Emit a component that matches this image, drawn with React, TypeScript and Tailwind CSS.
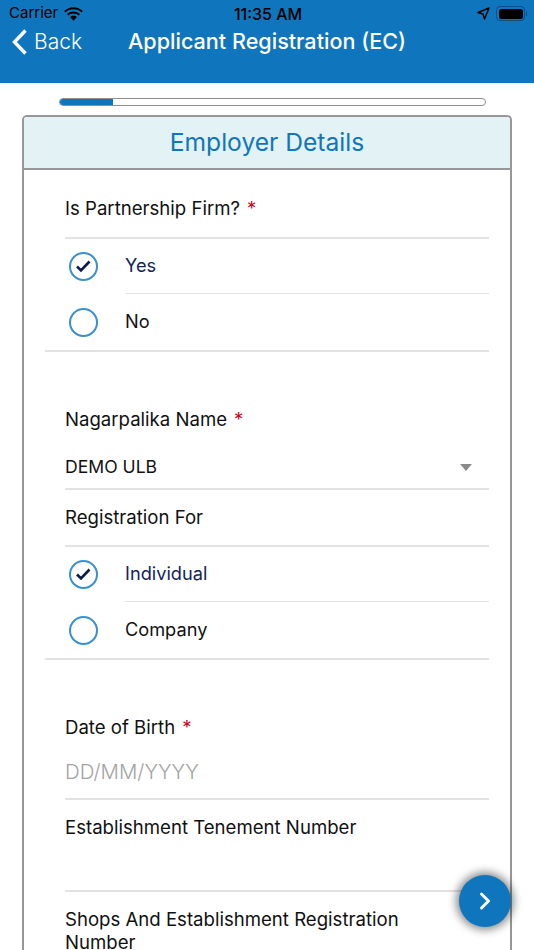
import { ChevronRight } from "lucide-react";

const font = "font-['Inter','Liberation_Sans',sans-serif]";

function Label({ text, required, className }: { text: string; required?: boolean; className: string }) {
  return (
    <div className={`pl-[41px] pr-[60px] ${className}`}>
      <div className="text-[18.6px] leading-[23px] text-[#111]">
        {text}
        {required && <span className="ml-[7px] text-[#d0021b]">*</span>}
      </div>
    </div>
  );
}

function Line({ indent = "ml-[41px]", thin }: { indent?: string; thin?: boolean }) {
  return <div className={`${indent} mr-[21px] ${thin ? "h-px bg-[#e4e4e4]" : "h-[2px] bg-[#e2e2e2]"}`} />;
}

function Radio({ label, checked, rowClass }: { label: string; checked?: boolean; rowClass: string }) {
  return (
    <div className={`flex items-center pl-[45px] ${rowClass}`}>
      <span className="flex h-[29px] w-[29px] shrink-0 items-center justify-center rounded-full border-2 border-[#3a90cf]">
        {checked && (
          <svg width="17" height="14" viewBox="0 0 17 14" fill="none">
            <path d="M2 7.5 L6 11.5 L14.5 2.5" stroke="#101a4a" strokeWidth="2.6" />
          </svg>
        )}
      </span>
      <span className={`ml-[27px] pb-[2px] text-[18.2px] leading-[24px] ${checked ? "text-[#14235c]" : "text-[#111]"}`}>{label}</span>
    </div>
  );
}

export default function App() {
  return (
    <div className={`relative h-[950px] w-[534px] overflow-hidden bg-white ${font}`}>
      <header className="h-[83px] bg-[#0f75bc]">
        <div className="flex h-[27px] items-center pl-[9px] pr-[7px] text-[15px] text-black">
          <div className="flex flex-1 items-center gap-[6px]">
            <span>Carrier</span>
            <svg width="19" height="14" viewBox="0 0 19 14" fill="black">
              <path d="M9.5 2.2c3.2 0 6 1.2 8.1 3.2l1.2-1.4C16.3 1.6 13 .2 9.5.2S2.7 1.6.2 4l1.2 1.4C3.5 3.4 6.3 2.2 9.5 2.2z" />
              <path d="M9.5 6.4c2 0 3.8.8 5.2 2L16 7C14.2 5.4 12 4.4 9.5 4.4S4.8 5.4 3 7l1.3 1.4c1.4-1.2 3.2-2 5.2-2z" />
              <path d="M9.5 8.7c-1.3 0-2.5.5-3.4 1.3l3.4 3.7 3.4-3.7c-.9-.8-2.1-1.3-3.4-1.3z" />
            </svg>
          </div>
          <span className="text-[16px] font-medium">11:35 AM</span>
          <div className="flex flex-1 items-center justify-end gap-[6px]">
            <svg width="13" height="13" viewBox="0 0 13 13" fill="none">
              <path d="M12 1 L1 5.5 L6 7 L7.5 12 Z" stroke="black" strokeWidth="1.4" strokeLinejoin="round" />
            </svg>
            <div className="flex items-center">
              <div className="flex h-[15px] w-[29px] items-center rounded-[4px] border border-[#0b4f80] p-[1.5px]">
                <div className="h-full w-full rounded-[2.5px] bg-black" />
              </div>
              <div className="ml-px h-[5px] w-px rounded-r bg-[#0b4f80]" />
            </div>
          </div>
        </div>
        <div className="flex h-[28px] items-center pt-[1px] text-white">
          <svg className="ml-[11px]" width="17" height="28" viewBox="0 0 17 28" fill="none">
            <path d="M14.5 2.5 L3.5 14 L14.5 25.5" stroke="white" strokeWidth="3.4" />
          </svg>
          <span className="ml-[6px] text-[21px] font-light">Back</span>
          <span className="ml-[46px] text-[21.6px] font-medium">Applicant Registration (EC)</span>
        </div>
      </header>

      <div className="ml-[59px] mr-[48px] mt-[15px] h-[8px] overflow-hidden rounded-full border-[1.5px] border-[#8f8f8f] bg-white">
        <div className="h-full w-[53px] bg-[#0f75bc]" />
      </div>

      <main className="ml-[22px] mt-[9px] h-[900px] w-[490px] rounded-t-[5px] border-x-2 border-t-2 border-[#979797]">
        <div className="flex h-[53px] items-center justify-center rounded-t-[3px] border-b-2 border-[#979797] bg-[#e2f2f5] text-[24.6px] text-[#0f75bc]">
          Employer Details
        </div>

        <Label text="Is Partnership Firm?" required className="pt-[27px]" />
        <div className="mt-[17px]"><Line /></div>
        <Radio label="Yes" checked rowClass="h-[54px]" />
        <Line indent="ml-[101px]" thin />
        <Radio label="No" rowClass="h-[56px]" />
        <Line indent="ml-[21px]" />

        <Label text="Nagarpalika Name" required className="pt-[56px]" />
        <div className="flex h-[51px] items-center justify-between pl-[41px] pr-[38px] pt-[21px] text-[17.6px] text-[#111]">
          <span>DEMO ULB</span>
          <span className="h-0 w-0 border-x-[6.5px] border-t-[7px] border-x-transparent border-t-[#8a8a8a]" />
        </div>
        <div className="mt-[6px]"><Line /></div>
        <Label text="Registration For" className="pt-[16px]" />
        <div className="mt-[16px]"><Line /></div>
        <Radio label="Individual" checked rowClass="h-[54px]" />
        <Line indent="ml-[101px]" thin />
        <Radio label="Company" rowClass="h-[56px]" />
        <Line indent="ml-[21px]" />

        <Label text="Date of Birth" required className="pt-[56px]" />
        <div className="flex h-[51px] items-center pl-[41px] pt-[16px] text-[20.4px] font-light text-[#a3a3a3]">DD/MM/YYYY</div>
        <div className="mt-[8px]"><Line /></div>
        <Label text="Establishment Tenement Number" className="pt-[16px]" />
        <div className="mt-[51px]"><Line /></div>
        <Label text="Shops And Establishment Registration Number" className="pt-[16px]" />
      </main>

      <button
        type="button"
        className="absolute left-[459px] top-[875px] flex h-[52px] w-[52px] items-center justify-center rounded-full bg-[#0f75bc] text-white shadow-[0_0_9px_3px_rgba(0,0,0,0.45)]"
      >
        <ChevronRight size={28} strokeWidth={2.5} />
      </button>
    </div>
  );
}
